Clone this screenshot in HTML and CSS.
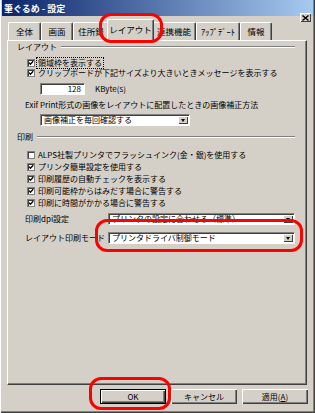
FILE: index.html
```html
<!DOCTYPE html>
<html lang="ja">
<head>
<meta charset="utf-8">
<title>筆ぐるめ - 設定</title>
<link rel="stylesheet" href="styles.css">
</head>
<body>
<div class="window">
  <div class="titlebar">
    <span class="title">筆ぐるめ - 設定</span>
    <span class="close"><svg width="7" height="6" viewBox="0 0 7 6"><path d="M0.5 0.5 L6.5 5.5 M6.5 0.5 L0.5 5.5" stroke="#000" stroke-width="1.4" fill="none"/></svg></span>
  </div>
  <div class="tabs">
    <div class="tab t1">全体</div>
    <div class="tab t2">画面</div>
    <div class="tab t3">住所録</div>
    <div class="tab selected">レイアウト</div>
    <div class="tab t5">連携機能</div>
    <div class="tab t6">ｱｯﾌﾟﾃﾞｰﾄ</div>
    <div class="tab t7">情報</div>
  </div>
  <div class="panel">
    <div class="group-head first"><span>レイアウト</span><span class="etch"></span></div>
    <div class="row cb-row r-cb1">
      <svg class="cb" width="8" height="8" viewBox="0 0 8 8"><rect x="0.5" y="0.5" width="7" height="7" fill="#fff" stroke="#808080"/><path d="M1 1.5 H7 M1.5 1 V7" stroke="#404040"/><path d="M2 3.6 L3.4 5.2 L6.2 2.2" stroke="#000" stroke-width="1.3" fill="none"/></svg>
      <span class="label focus">領域枠を表示する</span>
    </div>
    <div class="row cb-row r-cb2">
      <svg class="cb" width="8" height="8" viewBox="0 0 8 8"><rect x="0.5" y="0.5" width="7" height="7" fill="#fff" stroke="#808080"/><path d="M1 1.5 H7 M1.5 1 V7" stroke="#404040"/><path d="M2 3.6 L3.4 5.2 L6.2 2.2" stroke="#000" stroke-width="1.3" fill="none"/></svg>
      <span class="label">クリップボードが下記サイズより大きいときメッセージを表示する</span>
    </div>
    <div class="row r-input">
      <span class="field num">128</span>
      <span class="unit">KByte(s)</span>
    </div>
    <div class="row r-exif"><span>Exif Print形式の画像をレイアウトに配置したときの画像補正方法</span></div>
    <div class="row r-combo1">
      <span class="combo c1"><span class="combo-text">画像補正を毎回確認する</span><span class="arrow"><span class="tri"></span></span></span>
    </div>

    <div class="group-head second"><span>印刷</span><span class="etch"></span></div>
    <div class="row cb-row r-p1">
      <svg class="cb" width="8" height="8" viewBox="0 0 8 8"><rect x="0.5" y="0.5" width="7" height="7" fill="#fff" stroke="#808080"/><path d="M1 1.5 H7 M1.5 1 V7" stroke="#404040"/></svg>
      <span class="label">ALPS社製プリンタでフラッシュインク(金・銀)を使用する</span>
    </div>
    <div class="row cb-row r-p">
      <svg class="cb" width="8" height="8" viewBox="0 0 8 8"><rect x="0.5" y="0.5" width="7" height="7" fill="#fff" stroke="#808080"/><path d="M1 1.5 H7 M1.5 1 V7" stroke="#404040"/><path d="M2 3.6 L3.4 5.2 L6.2 2.2" stroke="#000" stroke-width="1.3" fill="none"/></svg>
      <span class="label">プリンタ簡単設定を使用する</span>
    </div>
    <div class="row cb-row r-p">
      <svg class="cb" width="8" height="8" viewBox="0 0 8 8"><rect x="0.5" y="0.5" width="7" height="7" fill="#fff" stroke="#808080"/><path d="M1 1.5 H7 M1.5 1 V7" stroke="#404040"/><path d="M2 3.6 L3.4 5.2 L6.2 2.2" stroke="#000" stroke-width="1.3" fill="none"/></svg>
      <span class="label">印刷履歴の自動チェックを表示する</span>
    </div>
    <div class="row cb-row r-p">
      <svg class="cb" width="8" height="8" viewBox="0 0 8 8"><rect x="0.5" y="0.5" width="7" height="7" fill="#fff" stroke="#808080"/><path d="M1 1.5 H7 M1.5 1 V7" stroke="#404040"/><path d="M2 3.6 L3.4 5.2 L6.2 2.2" stroke="#000" stroke-width="1.3" fill="none"/></svg>
      <span class="label">印刷可能枠からはみだす場合に警告する</span>
    </div>
    <div class="row cb-row r-p">
      <svg class="cb" width="8" height="8" viewBox="0 0 8 8"><rect x="0.5" y="0.5" width="7" height="7" fill="#fff" stroke="#808080"/><path d="M1 1.5 H7 M1.5 1 V7" stroke="#404040"/><path d="M2 3.6 L3.4 5.2 L6.2 2.2" stroke="#000" stroke-width="1.3" fill="none"/></svg>
      <span class="label">印刷に時間がかかる場合に警告する</span>
    </div>
    <div class="row r-dpi">
      <span class="row-label">印刷dpi設定</span>
      <span class="combo c2"><span class="combo-text">プリンタの設定に合わせる（標準）</span><span class="arrow"><span class="tri"></span></span></span>
    </div>
    <div class="row r-mode">
      <span class="row-label">レイアウト印刷モード</span>
      <span class="combo c2"><span class="combo-text">プリンタドライバ制御モード</span><span class="arrow"><span class="tri"></span></span></span>
    </div>
  </div>
  <div class="buttons">
    <span class="btn default">OK</span>
    <span class="btn">キャンセル</span>
    <span class="btn">適用(<u>A</u>)</span>
  </div>
  <div class="ring ring-tab"></div>
  <div class="ring ring-mode"></div>
  <div class="ring ring-ok"></div>
</div>
</body>
</html>
```

FILE: styles.css
```css
* {
  box-sizing: border-box;
  margin: 0;
  padding: 0;
}

html, body {
  width: 315px;
  height: 413px;
  overflow: hidden;
  background: #d4d0c8;
}

body {
  font-family: "Noto Sans CJK JP", sans-serif;
  font-size: 8px;
  line-height: 1;
  color: #000;
}

.window {
  position: relative;
  width: 315px;
  height: 413px;
  background: #d4d0c8;
  display: flex;
  flex-direction: column;
  box-shadow: inset 1px 0 #ffffff, inset -1px -1px #404040, inset -2px -2px #808080;
}

/* title bar */
.titlebar {
  height: 16px;
  margin: 0 2px;
  padding-left: 2px;
  display: flex;
  align-items: center;
  background: linear-gradient(to right, #0a246a, #a6caf0);
}

.title {
  color: #fff;
  font-weight: bold;
  font-size: 9px;
}

.close {
  margin-left: auto;
  margin-right: 2px;
  align-self: flex-start;
  margin-top: 13px;
  width: 11px;
  height: 9px;
  background: #d4d0c8;
  display: flex;
  align-items: center;
  justify-content: center;
  box-shadow: inset 1px 1px #fff, inset -1px -1px #404040;
}

/* tabs */
.tabs {
  margin-top: 3px;
  height: 21px;
  padding-left: 8px;
  display: flex;
  align-items: flex-end;
  position: relative;
  z-index: 2;
}

.tab {
  height: 18px;
  display: flex;
  align-items: center;
  justify-content: center;
  border-top: 1px solid #fff;
  border-left: 1px solid #fff;
  border-right: 1px solid #404040;
  border-radius: 2px 2px 0 0;
  box-shadow: inset -1px 0 #808080;
  background: #d4d0c8;
  font-size: 8.5px;
}

.t1 { width: 33px; }
.t2 { width: 32px; }
.t3 { width: 36px; }
.t5 { width: 44px; }
.t6 { width: 44px; }
.t7 { width: 32px; }

.tab.selected {
  width: 47px;
  height: 22px;
  margin: 0 -2px -1px -2px;
  padding-bottom: 3px;
  position: relative;
  z-index: 3;
}

/* panel */
.panel {
  margin-left: 7px;
  width: 300px;
  height: 345px;
  border-top: 1px solid #fff;
  border-left: 1px solid #fff;
  border-right: 1px solid #404040;
  border-bottom: 1px solid #404040;
  box-shadow: inset -1px -1px #808080;
  display: flex;
  flex-direction: column;
}

.group-head {
  height: 12px;
  display: flex;
  align-items: center;
  padding-left: 9px;
  padding-right: 11px;
}

.group-head.second {
  margin-top: 5px;
}

.etch {
  flex: 1;
  height: 2px;
  margin-left: 4px;
  border-top: 1px solid #808080;
  border-bottom: 1px solid #fff;
}

.row {
  display: flex;
  align-items: center;
}

.cb-row {
  padding-left: 19px;
}

.cb {
  flex: none;
  margin-right: 3px;
}

.focus {
  outline: 1px dotted #000;
  outline-offset: 1px;
}

.r-cb1 { margin-top: 5px; height: 10px; }
.r-cb2 { height: 10px; }

.r-input {
  margin-top: 5px;
  height: 12px;
  padding-left: 32px;
}

.field {
  width: 45px;
  height: 12px;
  background: #fff;
  border: 1px solid;
  border-color: #808080 #fff #fff #808080;
  box-shadow: inset 1px 1px #404040;
  display: flex;
  align-items: center;
}

.num {
  justify-content: flex-end;
  padding-right: 3px;
}

.unit {
  margin-left: 10px;
}

.r-exif {
  margin-top: 5px;
  height: 10px;
  padding-left: 17px;
}

.r-combo1 {
  margin-top: 4px;
  height: 12px;
  padding-left: 32px;
}

.combo {
  height: 12px;
  background: #fff;
  border: 1px solid;
  border-color: #808080 #fff #fff #808080;
  box-shadow: inset 1px 1px #404040;
  display: flex;
  align-items: center;
  padding: 0 1px 0 3px;
}

.combo-text {
  flex: 1;
  white-space: nowrap;
  line-height: 10px;
}

.c1 { width: 150px; }
.c2 { width: 187px; }

.arrow {
  flex: none;
  width: 10px;
  height: 8px;
  background: #d4d0c8;
  box-shadow: inset 1px 1px #fff, inset -1px -1px #404040;
  display: flex;
  align-items: center;
  justify-content: center;
}

.tri {
  width: 0;
  height: 0;
  border-left: 2.5px solid transparent;
  border-right: 2.5px solid transparent;
  border-top: 3px solid #000;
}

.r-p1 { margin-top: 6px; height: 12px; }
.r-p { height: 12px; }

.r-dpi {
  margin-top: 4px;
  height: 12px;
  padding-left: 17px;
}

.r-mode {
  margin-top: 7px;
  height: 12px;
  padding-left: 17px;
}

.row-label {
  width: 83px;
  white-space: nowrap;
}

/* buttons */
.buttons {
  margin-top: 4px;
  height: 15px;
  padding-right: 7px;
  display: flex;
  justify-content: flex-end;
  gap: 5px;
}

.btn {
  width: 66px;
  height: 15px;
  display: flex;
  align-items: center;
  justify-content: center;
  background: #d4d0c8;
  box-shadow: inset 1px 1px #fff, inset -1px -1px #404040, inset -2px -2px #808080;
}

.btn.default {
  border: 1px solid #000;
}

/* red highlight rings */
.ring {
  position: absolute;
  border: 3px solid #ff0000;
  border-radius: 12px;
  z-index: 10;
}

.ring-tab {
  left: 99px;
  top: 13px;
  width: 64px;
  height: 30px;
}

.ring-mode {
  left: 95px;
  top: 219px;
  width: 208px;
  height: 33px;
}

.ring-ok {
  left: 89px;
  top: 377px;
  width: 82px;
  height: 33px;
}
```
